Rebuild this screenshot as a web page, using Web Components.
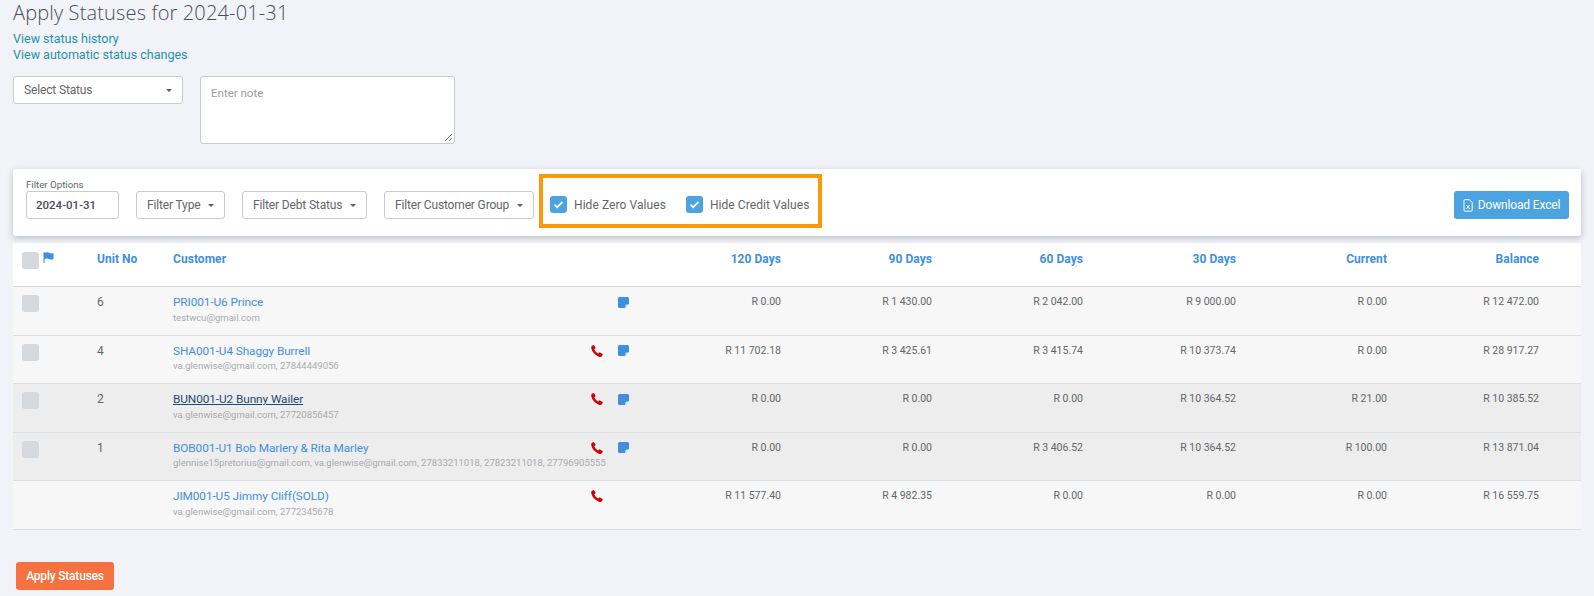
<!DOCTYPE html>
<html><head><meta charset="utf-8">
<style>
html,body{margin:0;padding:0;background:#f1f3f8;}
body{font-family:Roboto,"Liberation Sans",sans-serif;color:#636669;height:596px;overflow:hidden;}
</style></head>
<body>
<status-page></status-page>
<template id="t-dd"><style>
:host{display:inline-flex;align-items:center;justify-content:space-between;box-sizing:border-box;background:#fff;border:1px solid #c9cbd0;border-radius:3px;font-size:12px;letter-spacing:-.15px;color:#636669;height:var(--h,28px);padding:0 10px;width:var(--w,auto);white-space:nowrap;}
i{width:0;height:0;border:3.5px solid transparent;border-top-color:#595d6e;border-bottom:0;margin-left:8px;}
</style><span><slot></slot></span><i></i></template>
<template id="t-date"><style>
:host{display:inline-flex;align-items:center;box-sizing:border-box;background:#fff;border:1px solid #c9cbd0;border-radius:3px;font-size:11.5px;font-weight:500;color:#4a4d57;height:28px;width:93px;padding:0 9px;white-space:nowrap;}
</style><slot></slot></template>
<template id="t-check"><style>
:host{display:inline-flex;align-items:center;font-size:12px;letter-spacing:.07px;color:#636669;gap:7px;white-space:nowrap;}
b{width:17px;height:17px;border-radius:3px;background:#4ba3e0;display:flex;align-items:center;justify-content:center;}
</style><b><svg width="11" height="9" viewBox="0 0 11 9"><path d="M1.5 4.6 4.2 7.2 9.5 1.8" fill="none" stroke="#fff" stroke-width="1.8"/></svg></b><span><slot></slot></span></template>
<template id="t-row"><style>
:host{display:grid;grid-template-columns:84px 76px 457px 151px 151px 151px 153px 151px 152px 43px;box-sizing:border-box;height:48.5px;border-bottom:1px solid #dcdee2;background:var(--bg,#f7f7f7);font-size:10.5px;color:#636669;}
.box{margin:8px 0 0 9px;width:17px;height:17px;border-radius:3px;background:#d5d9dc;}
.unit{padding-top:8px;font-size:12px;}
.cust{padding-top:7.5px;min-width:0;}
.top{display:flex;align-items:center;height:15px;}
.name{font-size:11.8px;letter-spacing:-.08px;color:var(--link,#3f8fe0);text-decoration:var(--ul,none);flex:1;white-space:nowrap;}
.sub{font-size:9.5px;color:#a9abaf;margin-top:2px;white-space:nowrap;line-height:12px;}
.ic{width:27px;display:flex;}
.ic.n{width:12px;}
.amt{padding-top:8px;text-align:right;}
</style>
<div class="cb"><div class="box"></div></div><div class="unit"></div>
<div class="cust"><div class="top"><span class="name"></span><span class="ic p"></span><span class="ic n"></span></div><div class="sub"></div></div>
<div class="amt"></div><div class="amt"></div><div class="amt"></div><div class="amt"></div><div class="amt"></div><div class="amt"></div><div></div>
</template>
<template id="t-page"><style>
:host{display:block;padding:0 13px;}
h1{margin:0;font:300 20px/26px "Open Sans",sans-serif;letter-spacing:.15px;color:#4a4d57;}
.links{margin-top:5px;display:flex;flex-direction:column;font-size:12.5px;line-height:16px;color:#2491ac;}
.form{display:flex;gap:17px;margin-top:13px;align-items:flex-start;}
.note{box-sizing:border-box;width:255px;height:68px;background:#fff;border:1px solid #c9cbd0;border-radius:3px;padding:9px 10px;font-size:11.5px;color:#9a9ca2;position:relative;}
.grip{position:absolute;right:1px;bottom:1px;}
.card{box-sizing:border-box;margin-top:25px;height:67px;background:#fff;border-radius:3px;box-shadow:0 2px 6px rgba(60,65,80,.3);display:flex;padding:0 12px 0 13px;position:relative;}
.fo{font-size:9.7px;color:#636669;position:absolute;left:13px;top:10px;}
.bar{display:flex;align-items:flex-start;padding-top:22px;gap:17px;}
.hl{box-sizing:border-box;border:4px solid #f99a0a;height:54px;margin:5px 0 0 5px;width:283px;display:flex;align-items:center;gap:20px;padding:7px 0 0 7px;}
.dl{margin:22px 0 0 auto;width:115px;height:28px;background:#4ba3e0;border-radius:3px;color:#fff;font-size:12px;letter-spacing:-.15px;display:flex;align-items:center;justify-content:center;gap:5px;}
.tbl{margin-top:7px;}
.hd{display:grid;grid-template-columns:84px 76px 457px 151px 151px 151px 153px 151px 152px 43px;height:44px;box-sizing:border-box;background:#fff;border-bottom:1px solid #d8dade;font-weight:700;font-size:12px;letter-spacing:.05px;color:#3f8fe0;padding-top:9px;}
.hd .r{text-align:right;}
.hd .c{display:flex;align-items:flex-start;gap:4px;padding-left:9px;}
.bx{width:17px;height:17px;border-radius:3px;background:#d5d9dc;}
.apply{display:flex;align-items:center;justify-content:center;margin:32px 0 0 3px;width:98px;height:28px;background:#f5713f;border-radius:3px;color:#fff;font-size:12px;font-weight:500;letter-spacing:-.2px;}
</style>
<h1>Apply Statuses for 2024-01-31</h1>
<div class="links"><span>View status history</span><span>View automatic status changes</span></div>
<div class="form"><x-dd style="--w:170px">Select Status</x-dd>
<div class="note">Enter note<svg class="grip" width="9" height="9" viewBox="0 0 9 9"><path d="M8 1 1 8M8 5 5 8" stroke="#777" stroke-width="1"/></svg></div></div>
<div class="card"><span class="fo">Filter Options</span>
<div class="bar"><x-date>2024-01-31</x-date><x-dd style="--w:89px">Filter Type</x-dd><x-dd style="--w:125px">Filter Debt Status</x-dd><x-dd style="--w:150px">Filter Customer Group</x-dd></div>
<div class="hl"><x-check>Hide Zero Values</x-check><x-check>Hide Credit Values</x-check></div>
<div class="dl"><svg width="10" height="13" viewBox="0 0 10 13"><path d="M1 1.5A.8.8 0 0 1 1.8.7H6.5L9.2 3.4V11.3A.9.9 0 0 1 8.3 12.2H1.8A.8.8 0 0 1 1 11.3Z" fill="none" stroke="#fff" stroke-width="1"/><path d="M3.3 6 6.6 10M6.6 6 3.3 10" stroke="#fff" stroke-width="1"/></svg><span>Download Excel</span></div>
</div>
<div class="tbl">
<div class="hd"><div class="c"><div class="bx"></div><svg width="11" height="11" viewBox="0 0 11 11"><path d="M.5 0H1.6V11H.5ZM1.6 1C3.5 0 5 .3 6.5 1S9 1.6 10.5 1V7C9 7.8 7.5 7.6 6 7S3.5 6.2 1.6 7Z" fill="#3f8fe0"/></svg></div><div>Unit No</div><div>Customer</div><div class="r">120 Days</div><div class="r">90 Days</div><div class="r">60 Days</div><div class="r">30 Days</div><div class="r">Current</div><div class="r">Balance</div><div></div></div>
<div id="rows"></div></div>
<div class="apply">Apply Statuses</div>
</template>
<script>
const PHONE='<svg width="12" height="12" viewBox="0 0 12 12"><path d="M.9.8 3 0 4.6 3.1 3.3 4.3C3.9 6 5.4 7.6 7.2 8.5L8.5 7.3 11.9 9.2 11 11C10.5 11.9 9.3 12.2 7.9 11.7 4.3 10.4 1.3 7.4.3 3.6 0 2.4.3 1.4.9.8Z" fill="#cc0000"/></svg>';
const NOTE='<svg width="11" height="11" viewBox="0 0 11 11"><path d="M1.5 0H9.5A1.5 1.5 0 0 1 11 1.5V7L7 11H1.5A1.5 1.5 0 0 1 0 9.5V1.5A1.5 1.5 0 0 1 1.5 0Z" fill="#3f8fe0"/><path d="M11 7.4V8L8 11H7.4L7.4 8.6 8 7.4Z" fill="#cfe2f7"/></svg>';
function sh(el,id){const s=el.attachShadow({mode:'open'});s.appendChild(document.getElementById(id).content.cloneNode(true));return s;}
customElements.define('x-dd',class extends HTMLElement{constructor(){super();sh(this,'t-dd');}});
customElements.define('x-date',class extends HTMLElement{constructor(){super();sh(this,'t-date');}});
customElements.define('x-check',class extends HTMLElement{constructor(){super();sh(this,'t-check');}});
customElements.define('x-row',class extends HTMLElement{
 set data(d){const s=sh(this,'t-row');
  s.querySelector('.unit').textContent=d.u||'';
  if(!d.u)s.querySelector('.box').remove();
  s.querySelector('.name').textContent=d.n;s.querySelector('.sub').textContent=d.s;
  if(d.p)s.querySelector('.p').innerHTML=PHONE;if(d.o)s.querySelector('.n').innerHTML=NOTE;
  s.querySelectorAll('.amt').forEach((e,i)=>e.textContent=d.a[i]);}
});
customElements.define('status-page',class extends HTMLElement{constructor(){super();const s=sh(this,'t-page');
 const R=[
 {u:'6',n:'PRI001-U6 Prince',s:'testwcu@gmail.com',o:1,a:['R 0.00','R 1 430.00','R 2 042.00','R 9 000.00','R 0.00','R 12 472.00']},
 {u:'4',n:'SHA001-U4 Shaggy Burrell',s:'va.glenwise@gmail.com, 27844449056',p:1,o:1,a:['R 11 702.18','R 3 425.61','R 3 415.74','R 10 373.74','R 0.00','R 28 917.27']},
 {u:'2',n:'BUN001-U2 Bunny Wailer',s:'va.glenwise@gmail.com, 27720856457',p:1,o:1,h:1,a:['R 0.00','R 0.00','R 0.00','R 10 364.52','R 21.00','R 10 385.52']},
 {u:'1',n:'BOB001-U1 Bob Marlery & Rita Marley',s:'glennise15pretorius@gmail.com, va.glenwise@gmail.com, 27833211018, 27823211018, 27796905555',p:1,o:1,d:1,a:['R 0.00','R 0.00','R 3 406.52','R 10 364.52','R 100.00','R 13 871.04']},
 {n:'JIM001-U5 Jimmy Cliff(SOLD)',s:'va.glenwise@gmail.com, 2772345678',p:1,a:['R 11 577.40','R 4 982.35','R 0.00','R 0.00','R 0.00','R 16 559.75']}];
 const w=s.getElementById('rows');
 R.forEach(d=>{const r=document.createElement('x-row');if(d.h||d.d)r.style.setProperty('--bg','#ededed');if(d.h){r.style.setProperty('--link','#1c4a78');r.style.setProperty('--ul','underline');}r.data=d;w.appendChild(r);});
}});
</script>
</body></html>
